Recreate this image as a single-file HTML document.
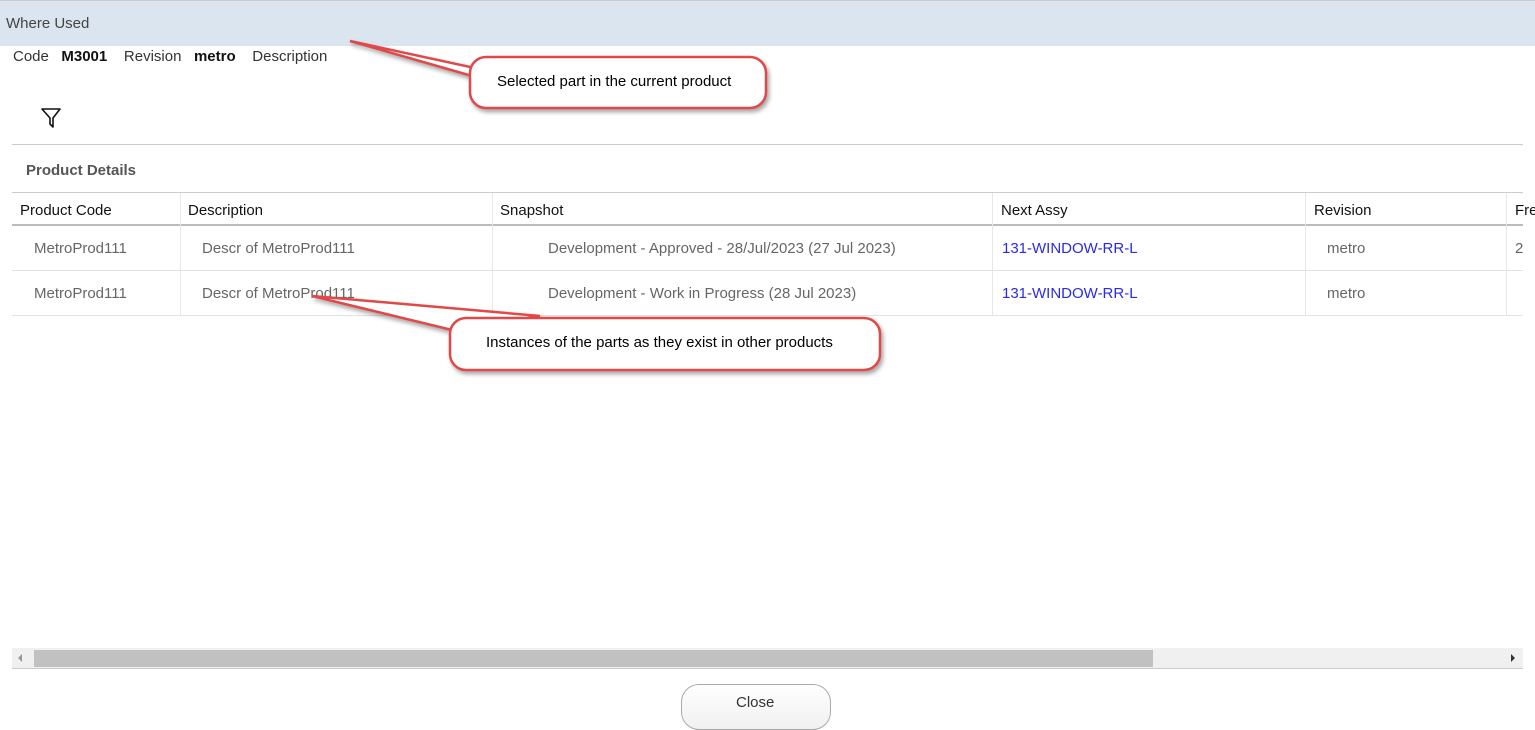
<!DOCTYPE html>
<html><head><meta charset="utf-8"><style>
body{margin:0;width:1535px;height:720px;background:#fff;position:relative;overflow:hidden;font-family:"Liberation Sans",sans-serif;}
.a{position:absolute;white-space:nowrap;}
.h{font-size:15px;color:#111;}
.c{font-size:15px;color:#666;}
.l{font-size:15px;color:#2a2ae8;}
.vl{position:absolute;width:1px;background:#e6e6e6;}
</style></head><body>
<div class="a" style="left:0;top:0;width:1535px;height:46px;background:#dae5ef;border-top:1px solid #ccc;box-sizing:border-box"></div>
<div class="a" style="left:6px;top:15px;font-size:15px;color:#444">Where Used</div>
<div class="a" style="left:13px;top:48px;font-size:15px;color:#333">Code &nbsp;&nbsp;<b style="color:#111">M3001</b>&nbsp;&nbsp;&nbsp; Revision &nbsp;&nbsp;<b style="color:#111">metro</b>&nbsp;&nbsp;&nbsp; Description</div>
<svg class="a" style="left:40px;top:107px" width="22" height="22" viewBox="0 0 22 22"><path d="M2 2h18l-7 9v9l-3-3v-6z" fill="none" stroke="#111" stroke-width="1.6" stroke-linejoin="round"/></svg>
<div class="a" style="left:12px;top:144px;width:1511px;height:1px;background:#ccc"></div>
<div class="a" style="left:26px;top:162px;font-size:15px;color:#555;font-weight:bold">Product Details</div>
<div class="a" style="left:12px;top:192px;width:1511px;height:1px;background:#ccc"></div>
<div class="a" style="left:12px;top:224px;width:1511px;height:2px;background:#bbb"></div>
<div class="a" style="left:12px;top:270px;width:1511px;height:1px;background:#e2e2e2"></div>
<div class="a" style="left:12px;top:315px;width:1511px;height:1px;background:#e2e2e2"></div>
<div class="vl" style="left:180px;top:193px;height:122px"></div>
<div class="vl" style="left:492px;top:193px;height:122px"></div>
<div class="vl" style="left:992px;top:193px;height:122px"></div>
<div class="vl" style="left:1305px;top:193px;height:122px"></div>
<div class="vl" style="left:1506px;top:193px;height:122px"></div>
<div class="a h" style="left:20px;top:202px">Product Code</div>
<div class="a h" style="left:188px;top:202px">Description</div>
<div class="a h" style="left:500px;top:202px">Snapshot</div>
<div class="a h" style="left:1001px;top:202px">Next Assy</div>
<div class="a h" style="left:1314px;top:202px">Revision</div>
<div class="a h" style="left:1515px;top:202px">Fre</div>
<div class="a c" style="left:34px;top:240px">MetroProd111</div>
<div class="a c" style="left:202px;top:240px">Descr of MetroProd111</div>
<div class="a c" style="left:548px;top:240px">Development - Approved - 28/Jul/2023 (27 Jul 2023)</div>
<div class="a l" style="left:1002px;top:240px">131-WINDOW-RR-L</div>
<div class="a c" style="left:1327px;top:240px">metro</div>
<div class="a c" style="left:1515px;top:240px">2</div>
<div class="a c" style="left:34px;top:285px">MetroProd111</div>
<div class="a c" style="left:202px;top:285px">Descr of MetroProd111</div>
<div class="a c" style="left:548px;top:285px">Development - Work in Progress (28 Jul 2023)</div>
<div class="a l" style="left:1002px;top:285px">131-WINDOW-RR-L</div>
<div class="a c" style="left:1327px;top:285px">metro</div>
<div class="a" style="left:12px;top:648px;width:1511px;height:20px;background:#f0f0f0;border-bottom:1px solid #ccc"></div>
<div class="a" style="left:34px;top:650px;width:1119px;height:17px;background:#c1c1c1"></div>
<svg class="a" style="left:16px;top:653px" width="8" height="10"><path d="M6 1L2 5l4 4z" fill="#999"/></svg>
<svg class="a" style="left:1509px;top:653px" width="8" height="10"><path d="M2 1l4 4-4 4z" fill="#333"/></svg>
<div class="a" style="left:681px;top:684px;width:148px;height:44px;border:1px solid #aaa;border-radius:18px;background:linear-gradient(#fff,#f0f0f0)"></div>
<div class="a" style="left:736px;top:694px;font-size:15px;color:#333">Close</div>
<svg class="a" style="left:0;top:0" width="1535" height="720">
<defs><filter id="s"><feDropShadow dx="2" dy="3" stdDeviation="2" flood-opacity="0.35"/></filter></defs>
<g filter="url(#s)" fill="#fff" stroke="#e04848" stroke-width="2.5">
<path d="M350 41L475 68L472 76Z"/>
<rect x="470" y="57" width="296" height="51" rx="16"/>
<path d="M312 296L540 316L452 330Z"/>
<rect x="450" y="318" width="430" height="52" rx="16"/>
</g>
<g fill="#fff"><rect x="472" y="59" width="292" height="47" rx="14"/><rect x="452" y="320" width="426" height="48" rx="14"/></g>
</svg>
<div class="a" style="left:497px;top:73px;font-size:15px;color:#000">Selected part in the current product</div>
<div class="a" style="left:486px;top:334px;font-size:15px;color:#000">Instances of the parts as they exist in other products</div>
</body></html>
